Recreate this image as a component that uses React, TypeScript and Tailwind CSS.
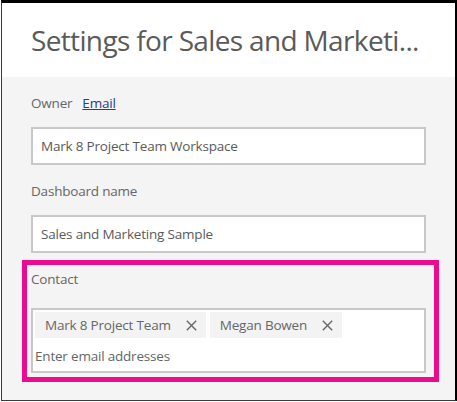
import React from "react";

function XIcon() {
  return (
    <svg width="11" height="11" viewBox="0 0 11 11" className="shrink-0">
      <path d="M0.8 0.8 L10.2 10.2 M10.2 0.8 L0.8 10.2" stroke="#666" strokeWidth="1.4" fill="none" />
    </svg>
  );
}

function Chip({ label }: { label: string }) {
  return (
    <div className="flex h-[26px] items-center gap-[15px] bg-[#f3f3f3] pl-[10px] pr-[9px]">
      <span className="text-[13.5px] leading-[20px] tracking-[-0.2px] text-[#666]">{label}</span>
      <XIcon />
    </div>
  );
}

const txt = "text-[13.5px] leading-[20px] tracking-[-0.2px]";

export default function App() {
  return (
    <div
      className="relative h-[402px] w-[457px] bg-white"
      style={{ fontFamily: '"Open Sans", "Noto Sans", sans-serif' }}
    >
      <div className="ml-px flex h-[401px] w-[456px] flex-col border-t-[3px] border-l border-r-2 border-b border-t-black border-l-[#3a3a3a] border-r-black border-b-[#3a3a3a]">
        <div className="flex h-[74px] items-start bg-white pl-[29px] pt-[19px]">
          <h1 className="text-[28px] font-normal leading-[36px] tracking-[-0.65px] text-[#5a5a5a]">
            Settings for Sales and Marketi...
          </h1>
        </div>
        <div className="flex flex-1 flex-col bg-[#f4f4f4] px-[29px] pt-[16px]">
          <div className={`flex h-[20px] items-center gap-[10px] ${txt}`}>
            <span className="text-[#666]">Owner</span>
            <a className="text-[#23408e] underline">Email</a>
          </div>
          <div className={`mt-[14px] flex h-[38px] items-center border-2 border-[#c8c8c8] bg-white pl-[8px] text-[#5a5a5a] ${txt}`}>
            Mark 8 Project Team Workspace
          </div>
          <div className={`mt-[16px] h-[20px] text-[#666] ${txt}`}>Dashboard name</div>
          <div className={`mt-[14px] flex h-[38px] items-center border-2 border-[#c8c8c8] bg-white pl-[8px] text-[#5a5a5a] ${txt}`}>
            Sales and Marketing Sample
          </div>
          <div className={`mt-[16px] h-[20px] text-[#666] ${txt}`}>Contact</div>
          <div className="mt-[19px] flex h-[65px] flex-col border-2 border-[#c8c8c8] bg-white px-[2px] pt-[2px]">
            <div className="flex gap-[4px]">
              <Chip label="Mark 8 Project Team" />
              <Chip label="Megan Bowen" />
            </div>
            <div className={`mt-[8px] text-[#666] ${txt}`}>Enter email addresses</div>
          </div>
        </div>
      </div>
      <div className="pointer-events-none absolute left-[22px] top-[260px] h-[122px] w-[417px] border-[5px] border-[#ec0b8d]" />
    </div>
  );
}
